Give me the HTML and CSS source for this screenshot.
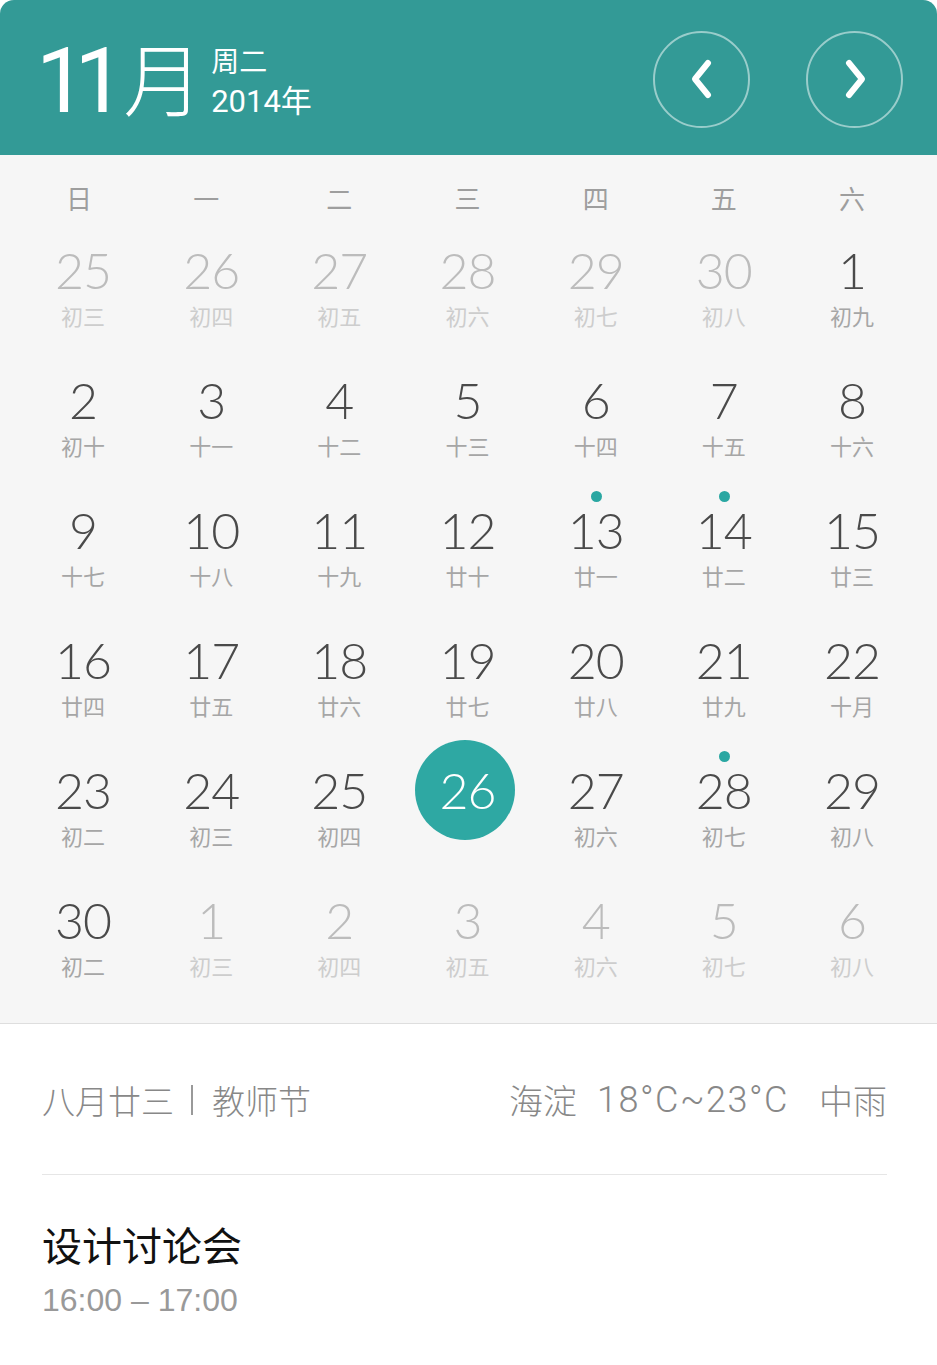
FILE: index.html
```html
<!DOCTYPE html>
<html lang="zh-CN">
<head>
<meta charset="utf-8">
<title>日历</title>
<link rel="stylesheet" href="styles.css">
</head>
<body>
<div class="app">
  <header class="top">
    <div class="month">11<span class="yue">月</span></div>
    <div class="meta">
      <div class="weekday">周二</div>
      <div class="year">2014年</div>
    </div>
    <div class="navs">
      <button class="nav" aria-label="上个月">
        <svg width="26" height="42" viewBox="0 0 26 42"><polyline points="19,5 6,21 19,37" fill="none" stroke="#fff" stroke-width="6" stroke-linecap="round" stroke-linejoin="round"/></svg>
      </button>
      <button class="nav" aria-label="下个月">
        <svg width="26" height="42" viewBox="0 0 26 42"><polyline points="7,5 20,21 7,37" fill="none" stroke="#fff" stroke-width="6" stroke-linecap="round" stroke-linejoin="round"/></svg>
      </button>
    </div>
  </header>

  <section class="cal">
    <div class="week">
      <span>日</span><span>一</span><span>二</span><span>三</span><span>四</span><span>五</span><span>六</span>
    </div>
    <div class="grid">
      <div class="cell out"><span class="num">25</span><span class="lunar">初三</span></div>
      <div class="cell out"><span class="num">26</span><span class="lunar">初四</span></div>
      <div class="cell out"><span class="num">27</span><span class="lunar">初五</span></div>
      <div class="cell out"><span class="num">28</span><span class="lunar">初六</span></div>
      <div class="cell out"><span class="num">29</span><span class="lunar">初七</span></div>
      <div class="cell out"><span class="num">30</span><span class="lunar">初八</span></div>
      <div class="cell"><span class="num">1</span><span class="lunar">初九</span></div>

      <div class="cell"><span class="num">2</span><span class="lunar">初十</span></div>
      <div class="cell"><span class="num">3</span><span class="lunar">十一</span></div>
      <div class="cell"><span class="num">4</span><span class="lunar">十二</span></div>
      <div class="cell"><span class="num">5</span><span class="lunar">十三</span></div>
      <div class="cell"><span class="num">6</span><span class="lunar">十四</span></div>
      <div class="cell"><span class="num">7</span><span class="lunar">十五</span></div>
      <div class="cell"><span class="num">8</span><span class="lunar">十六</span></div>

      <div class="cell"><span class="num">9</span><span class="lunar">十七</span></div>
      <div class="cell"><span class="num">10</span><span class="lunar">十八</span></div>
      <div class="cell"><span class="num">11</span><span class="lunar">十九</span></div>
      <div class="cell"><span class="num">12</span><span class="lunar">廿十</span></div>
      <div class="cell event"><span class="num">13</span><span class="lunar">廿一</span></div>
      <div class="cell event"><span class="num">14</span><span class="lunar">廿二</span></div>
      <div class="cell"><span class="num">15</span><span class="lunar">廿三</span></div>

      <div class="cell"><span class="num">16</span><span class="lunar">廿四</span></div>
      <div class="cell"><span class="num">17</span><span class="lunar">廿五</span></div>
      <div class="cell"><span class="num">18</span><span class="lunar">廿六</span></div>
      <div class="cell"><span class="num">19</span><span class="lunar">廿七</span></div>
      <div class="cell"><span class="num">20</span><span class="lunar">廿八</span></div>
      <div class="cell"><span class="num">21</span><span class="lunar">廿九</span></div>
      <div class="cell"><span class="num">22</span><span class="lunar">十月</span></div>

      <div class="cell"><span class="num">23</span><span class="lunar">初二</span></div>
      <div class="cell"><span class="num">24</span><span class="lunar">初三</span></div>
      <div class="cell"><span class="num">25</span><span class="lunar">初四</span></div>
      <div class="cell sel"><span class="num">26</span></div>
      <div class="cell"><span class="num">27</span><span class="lunar">初六</span></div>
      <div class="cell event"><span class="num">28</span><span class="lunar">初七</span></div>
      <div class="cell"><span class="num">29</span><span class="lunar">初八</span></div>

      <div class="cell"><span class="num">30</span><span class="lunar">初二</span></div>
      <div class="cell out"><span class="num">1</span><span class="lunar">初三</span></div>
      <div class="cell out"><span class="num">2</span><span class="lunar">初四</span></div>
      <div class="cell out"><span class="num">3</span><span class="lunar">初五</span></div>
      <div class="cell out"><span class="num">4</span><span class="lunar">初六</span></div>
      <div class="cell out"><span class="num">5</span><span class="lunar">初七</span></div>
      <div class="cell out"><span class="num">6</span><span class="lunar">初八</span></div>
    </div>
  </section>

  <section class="detail">
    <div class="info">
      <div class="festival">八月廿三<span class="sep"></span>教师节</div>
      <div class="weather"><span class="place">海淀</span><span class="temp">18°C~23°C</span><span class="cond">中雨</span></div>
    </div>
    <div class="event-item">
      <div class="title">设计讨论会</div>
      <div class="time">16:00 – 17:00</div>
    </div>
  </section>
</div>
</body>
</html>
```

FILE: styles.css
```css
* { box-sizing: border-box; }

html, body {
  margin: 0;
  padding: 0;
  background: #fff;
}

body {
  font-family: "Liberation Sans", "Noto Sans CJK SC", sans-serif;
}

.app {
  width: 937px;
}

/* header */
.top {
  height: 155px;
  background: #339a96;
  border-radius: 14px 14px 0 0;
  display: flex;
  align-items: center;
  padding: 0 34px 0 36px;
  color: #fff;
}

.month {
  font-family: "Roboto", sans-serif;
  font-size: 90px;
  line-height: 90px;
  letter-spacing: -12px;
  margin-top: 4px;
  display: flex;
  align-items: baseline;
}

.yue {
  font-family: "Noto Sans CJK SC", sans-serif;
  font-weight: 300;
  font-size: 80px;
  letter-spacing: 0;
  margin-left: 10px;
  position: relative;
  top: -2px;
}

.meta {
  margin-left: 8px;
  display: flex;
  flex-direction: column;
  margin-top: 8px;
}

.weekday {
  font-family: "Noto Sans CJK SC", sans-serif;
  font-size: 28px;
  line-height: 32px;
}

.year {
  font-size: 31px;
  line-height: 36px;
  margin-top: 8px;
  font-family: "Roboto", "Noto Sans CJK SC", sans-serif;
}

.navs {
  margin-left: auto;
  display: flex;
  gap: 56px;
  margin-top: 3px;
}

.nav {
  width: 97px;
  height: 97px;
  border-radius: 50%;
  border: 2px solid rgba(255, 255, 255, 0.5);
  background: transparent;
  padding: 0;
  display: flex;
  align-items: center;
  justify-content: center;
}

/* calendar */
.cal {
  background: #f6f6f6;
  border-bottom: 1px solid #dedede;
  padding: 0 21px 2px 19px;
}

.week {
  display: grid;
  grid-template-columns: repeat(7, 1fr);
  height: 84px;
  align-items: center;
  font-family: "Noto Sans CJK SC", sans-serif;
  font-size: 26px;
  color: #9e9e9e;
  text-align: center;
  margin-bottom: 2px;
}

.week span:nth-child(1) { transform: translateX(-4px); }
.week span:nth-child(2) { transform: translateX(-5px); }

.grid {
  display: grid;
  grid-template-columns: repeat(7, 1fr);
  grid-auto-rows: 130px;
}

.cell {
  position: relative;
  display: flex;
  flex-direction: column;
  align-items: center;
  padding-top: 1px;
  isolation: isolate;
}

.num {
  font-family: "Lato", sans-serif;
  font-weight: 300;
  font-size: 50px;
  line-height: 56px;
  letter-spacing: -1px;
  color: #4a4a4a;
  position: relative;
}

.lunar {
  font-family: "Noto Sans CJK SC", sans-serif;
  font-size: 22px;
  line-height: 28px;
  margin-top: 3px;
  color: #a6a6a6;
}

.cell.out .num { color: #bcbcbc; }
.cell.out .lunar { color: #cdcdcd; }

.cell.event::before {
  content: "";
  position: absolute;
  top: -10px;
  left: 50%;
  width: 11px;
  height: 11px;
  margin-left: -5px;
  border-radius: 50%;
  background: #2aa7a2;
}

.cell.sel .num {
  color: #fff;
}

.cell.sel .num::before {
  content: "";
  position: absolute;
  left: 50%;
  top: 50%;
  width: 100px;
  height: 100px;
  margin: -50px 0 0 -52px;
  border-radius: 50%;
  background: #2ea8a3;
  z-index: -1;
}

/* details */
.detail {
  padding: 0 50px 0 42px;
  color: #888;
}

.info {
  display: flex;
  justify-content: space-between;
  align-items: center;
  padding: 56px 0 54px;
  border-bottom: 1px solid #e6e6e6;
  font-size: 33px;
  line-height: 40px;
}

.festival {
  display: flex;
  align-items: center;
  font-family: "Noto Sans CJK SC", sans-serif;
  font-weight: 300;
  font-size: 33px;
}

.sep {
  display: inline-block;
  width: 2px;
  height: 30px;
  background: #999;
  margin: 0 19px 0 17px;
}

.weather {
  display: flex;
  align-items: center;
}

.place,
.cond {
  font-family: "Noto Sans CJK SC", sans-serif;
  font-weight: 300;
  font-size: 34px;
}

.temp {
  font-family: "Roboto", sans-serif;
  font-weight: 300;
  font-size: 36px;
  margin-left: 20px;
  letter-spacing: 1.5px;
}

.cond {
  margin-left: 30px;
}

.event-item {
  padding-top: 44px;
}

.title {
  font-family: "Noto Sans CJK SC", sans-serif;
  font-size: 40px;
  line-height: 50px;
  color: #111;
}

.time {
  margin-top: 11px;
  font-size: 32px;
  line-height: 40px;
  color: #999;
}
```
